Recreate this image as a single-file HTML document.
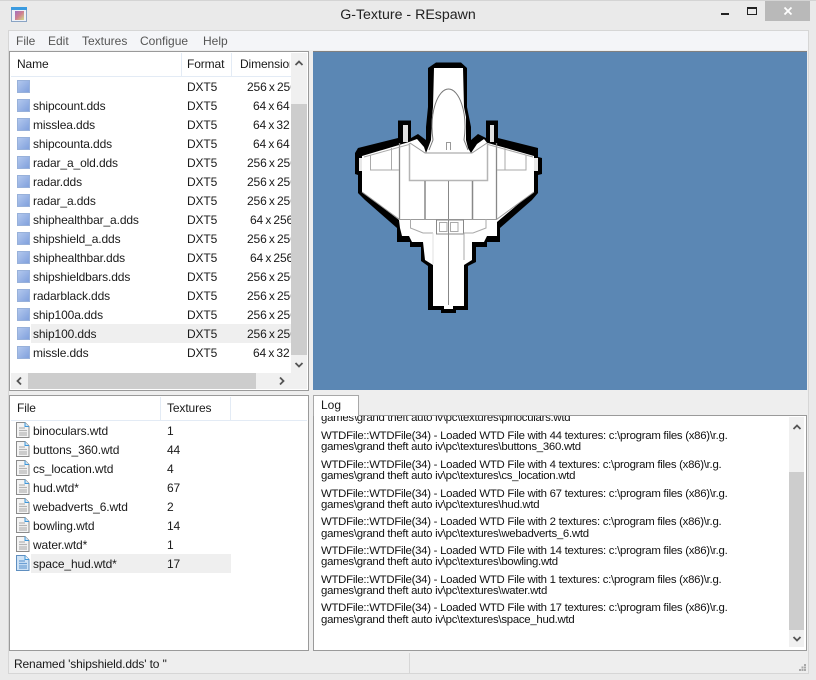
<!DOCTYPE html>
<html><head><meta charset="utf-8"><style>
html,body{margin:0;padding:0}
body{width:816px;height:680px;position:relative;overflow:hidden;background:#eaeaea;font-family:"Liberation Sans",sans-serif;font-size:12px;color:#1a1a1a}
.a{position:absolute;white-space:nowrap}
.panel{position:absolute;background:#fff;border:1px solid #9a9a9a;box-sizing:border-box;overflow:hidden}
.t{position:absolute;white-space:nowrap;line-height:19px;height:19px;letter-spacing:-.12px}
.d{word-spacing:-1px;overflow:hidden}
.w{left:247px;width:44px}
.m{left:250px;width:41px}
.s{left:253px}
.sep{position:absolute;width:1px;background:#e3ebf5}
svg{position:absolute;overflow:visible}
.log{position:absolute;left:7px;white-space:nowrap;font-size:11.4px;line-height:13px;height:13px;letter-spacing:-.27px;color:#111}
</style></head><body>
<div class="a" style="left:0;top:0;width:816px;height:1px;background:#d4d4d4"></div>
<svg style="left:11px;top:7px" width="17" height="16" viewBox="0 0 17 16">
<defs><linearGradient id="g1" x1="0" y1="0" x2="1" y2="1"><stop offset="0" stop-color="#a070c0"/><stop offset=".5" stop-color="#d08090"/><stop offset="1" stop-color="#d0e08a"/></linearGradient>
<linearGradient id="b" x1="0" y1="0" x2="1" y2="1"><stop offset="0" stop-color="#b4c9ee"/><stop offset="1" stop-color="#7f9fdc"/></linearGradient>
<symbol id="sq" viewBox="0 0 13 13" width="13" height="13"><rect x=".5" y=".5" width="12" height="12" fill="url(#b)" stroke="#98b1da"/></symbol>
<symbol id="doc" viewBox="0 0 15 16" width="15" height="16"><path d="M1.5.5H10L14 4.5V15.5H1.500Z" fill="#f4f4f4" stroke="#8b8b8b"/><path d="M10 .5V4.500H14" fill="#cfe6f8" stroke="#3f97d8"/><path d="M4 6H10M4 8.500H12M4 11H12M4 13H12" stroke="#b4b4b4" stroke-width="1.300"/></symbol>
<symbol id="docb" viewBox="0 0 15 16" width="15" height="16"><path d="M1.5.5H10L14 4.5V15.5H1.500Z" fill="#cfe3f6" stroke="#5f8fc0"/><path d="M10 .5V4.500H14" fill="#e8f3fc" stroke="#3f97d8"/><path d="M4 6H10M4 8.500H12M4 11H12M4 13H12" stroke="#6b9fd4" stroke-width="1.300"/></symbol>
</defs>
<rect x=".5" y=".5" width="15" height="14" fill="#eef2f8" stroke="#8aa4c4"/><rect x="0" y="0" width="16" height="3" fill="#3b9be0"/><rect x="4" y="4" width="9" height="9" fill="url(#g1)"/></svg>
<div class="a" style="left:0;width:816px;top:6px;text-align:center;font-size:14.200px;line-height:19px;color:#222">G-Texture - REspawn</div>
<div class="a" style="left:721px;top:13px;width:8px;height:2px;background:#222"></div>
<div class="a" style="left:747px;top:7px;border:1px solid #222;border-top-width:2px;width:8px;height:5px"></div>
<div class="a" style="left:765px;top:1px;width:45px;height:20px;background:#b9b9b9"></div>
<svg style="left:784px;top:7px" width="8" height="8"><path d="M.5.5L7.500 7.500M7.500.5L.5 7.500" stroke="#fff" stroke-width="1.800"/></svg>

<div class="a" style="left:8px;top:30px;width:801px;height:644px;border:1px solid #d6d6d6;box-sizing:border-box;background:#eeeeee"></div>
<div class="a" style="left:9px;top:31px;width:799px;height:19px;background:#f4f5f8"></div>
<div class="a" style="left:16px;top:32px;line-height:18px;color:#555">File</div>
<div class="a" style="left:48px;top:32px;line-height:18px;color:#555">Edit</div>
<div class="a" style="left:82px;top:32px;line-height:18px;color:#555">Textures</div>
<div class="a" style="left:140px;top:32px;line-height:18px;color:#555">Configue</div>
<div class="a" style="left:203px;top:32px;line-height:18px;color:#555">Help</div>

<!-- top list -->
<div class="panel" style="left:9px;top:51px;width:300px;height:340px"></div>
<div class="a" style="left:11px;top:76px;width:280px;height:1px;background:#e3ebf5"></div>
<div class="sep" style="left:181px;top:53px;height:23px"></div>
<div class="sep" style="left:231px;top:53px;height:23px"></div>
<div class="t" style="left:17px;top:55px">Name</div>
<div class="t" style="left:187px;top:55px">Format</div>
<div class="t" style="left:240px;top:55px;width:50px;overflow:hidden">Dimension</div>
<div class="a" style="left:31px;top:324px;width:260px;height:19px;background:#efefef"></div>

<svg style="left:17px;top:80px" width="13" height="13"><use href="#sq"/></svg>
<div class="t" style="left:187px;top:78px">DXT5</div><div class="t d w" style="top:78px">256 x 256</div>

<svg style="left:17px;top:99px" width="13" height="13"><use href="#sq"/></svg>
<div class="t" style="left:33px;top:97px">shipcount.dds</div><div class="t" style="left:187px;top:97px">DXT5</div><div class="t d s" style="top:97px">64 x 64</div>

<svg style="left:17px;top:118px" width="13" height="13"><use href="#sq"/></svg>
<div class="t" style="left:33px;top:116px">misslea.dds</div><div class="t" style="left:187px;top:116px">DXT5</div><div class="t d s" style="top:116px">64 x 32</div>

<svg style="left:17px;top:137px" width="13" height="13"><use href="#sq"/></svg>
<div class="t" style="left:33px;top:135px">shipcounta.dds</div><div class="t" style="left:187px;top:135px">DXT5</div><div class="t d s" style="top:135px">64 x 64</div>

<svg style="left:17px;top:156px" width="13" height="13"><use href="#sq"/></svg>
<div class="t" style="left:33px;top:154px">radar_a_old.dds</div><div class="t" style="left:187px;top:154px">DXT5</div><div class="t d w" style="top:154px">256 x 256</div>

<svg style="left:17px;top:175px" width="13" height="13"><use href="#sq"/></svg>
<div class="t" style="left:33px;top:173px">radar.dds</div><div class="t" style="left:187px;top:173px">DXT5</div><div class="t d w" style="top:173px">256 x 256</div>

<svg style="left:17px;top:194px" width="13" height="13"><use href="#sq"/></svg>
<div class="t" style="left:33px;top:192px">radar_a.dds</div><div class="t" style="left:187px;top:192px">DXT5</div><div class="t d w" style="top:192px">256 x 256</div>

<svg style="left:17px;top:213px" width="13" height="13"><use href="#sq"/></svg>
<div class="t" style="left:33px;top:211px">shiphealthbar_a.dds</div><div class="t" style="left:187px;top:211px">DXT5</div><div class="t d m" style="top:211px">64 x 256</div>

<svg style="left:17px;top:232px" width="13" height="13"><use href="#sq"/></svg>
<div class="t" style="left:33px;top:230px">shipshield_a.dds</div><div class="t" style="left:187px;top:230px">DXT5</div><div class="t d w" style="top:230px">256 x 256</div>

<svg style="left:17px;top:251px" width="13" height="13"><use href="#sq"/></svg>
<div class="t" style="left:33px;top:249px">shiphealthbar.dds</div><div class="t" style="left:187px;top:249px">DXT5</div><div class="t d m" style="top:249px">64 x 256</div>

<svg style="left:17px;top:270px" width="13" height="13"><use href="#sq"/></svg>
<div class="t" style="left:33px;top:268px">shipshieldbars.dds</div><div class="t" style="left:187px;top:268px">DXT5</div><div class="t d w" style="top:268px">256 x 256</div>

<svg style="left:17px;top:289px" width="13" height="13"><use href="#sq"/></svg>
<div class="t" style="left:33px;top:287px">radarblack.dds</div><div class="t" style="left:187px;top:287px">DXT5</div><div class="t d w" style="top:287px">256 x 256</div>

<svg style="left:17px;top:308px" width="13" height="13"><use href="#sq"/></svg>
<div class="t" style="left:33px;top:306px">ship100a.dds</div><div class="t" style="left:187px;top:306px">DXT5</div><div class="t d w" style="top:306px">256 x 256</div>

<svg style="left:17px;top:327px" width="13" height="13"><use href="#sq"/></svg>
<div class="t" style="left:33px;top:325px">ship100.dds</div><div class="t" style="left:187px;top:325px">DXT5</div><div class="t d w" style="top:325px">256 x 256</div>

<svg style="left:17px;top:346px" width="13" height="13"><use href="#sq"/></svg>
<div class="t" style="left:33px;top:344px">missle.dds</div><div class="t" style="left:187px;top:344px">DXT5</div><div class="t d s" style="top:344px">64 x 32</div>

<!-- top list scrollbars -->
<div class="a" style="left:291px;top:53px;width:16px;height:320px;background:#f0f0f0"></div>
<div class="a" style="left:291px;top:104px;width:16px;height:251px;background:#cdcdcd"></div>
<svg style="left:295px;top:60px" width="8" height="6"><path d="M.5 5L4 1.500L7.500 5" fill="none" stroke="#555" stroke-width="1.800"/></svg>
<svg style="left:295px;top:362px" width="8" height="6"><path d="M.5 1L4 4.500L7.500 1" fill="none" stroke="#555" stroke-width="1.800"/></svg>
<div class="a" style="left:11px;top:373px;width:296px;height:16px;background:#f0f0f0"></div>
<div class="a" style="left:28px;top:373px;width:228px;height:16px;background:#cdcdcd"></div>
<svg style="left:16px;top:377px" width="6" height="8"><path d="M5 .5L1.500 4L5 7.500" fill="none" stroke="#555" stroke-width="1.800"/></svg>
<svg style="left:279px;top:377px" width="6" height="8"><path d="M1 .5L4.500 4L1 7.500" fill="none" stroke="#555" stroke-width="1.800"/></svg>

<!-- preview -->
<div class="a" style="left:313px;top:51px;width:494px;height:339px;background:#5b87b4;border-top:1px solid #808080;box-sizing:border-box"></div>
<svg style="left:0;top:0" width="816" height="680">
<polygon fill="#000" points="436,62.500 461,62.500 467,68 467,107 471,127 471,140 478,134 486,138 486,120.500 498,120.500 498,138 538,148 538,157 542,158 542,174 538,175 538,193 532,200 500,228 500,242 487,242 487,247 476,247 476,262 468,266 468,310 456,310 456,313 441,313 441,310 428,310 428,266 421,261 421,247 410,247 410,242 397,242 397,228 365,200 358,193 358,175 355,174 355,153 358,148 398,138 398,120.500 411,120.500 411,138 418,134 426,140 426,127 428,107 428,68"/>
<polygon fill="#fff" points="434,68 463,68 464,107 466,117 466,140 468,148 471,153 477,144 484,139 487,142.700 534,156 534,192 523,200 497,222 497,236 487,236 484,242 472,242 472,260 464,265 464,306 433,306 433,265 425,260 423,242 412,242 409,236 402,236 400,228 399,220 373,200 362,192 362,156 409,142 417,139 424,147 426,153 428,148 431,140 432,117 433,107"/>
<rect x="359" y="158" width="3" height="13" fill="#e8e8e8"/><rect x="534" y="158" width="4" height="13" fill="#e8e8e8"/>
<rect x="403" y="125" width="5" height="17" fill="#e0e0e0"/><rect x="490" y="125" width="4" height="17" fill="#e0e0e0"/>
<g fill="none" stroke="#9b9b9b" stroke-width="1">
<path d="M433 140C429 112 438 89 448.500 89C459 89 468 112 464 140L468 150" stroke="#777"/>
<path d="M433 140L429 150"  stroke="#777"/>
<path d="M409.500 143V180.500H487.500V143" stroke="#b5b5b5" stroke-width="1.500"/>
<path d="M410 143L425 153H472L487 143" stroke="#999"/>
<path d="M399.500 143V219M496.500 143V219" stroke="#888" stroke-width="1.300"/>
<path d="M425 181V219M472.500 181V219" stroke="#888" stroke-width="1.500"/>
<path d="M448.500 181V305" stroke="#888"/>
<path d="M364 157L409 144.500M533 157L488 144.500" stroke="#aaa"/>
<path d="M370.500 155V170H399M526 155V170H497M391.500 148V170M505 148V170" stroke="#aaa"/>
<path d="M362 192L399.500 219.500H496.500L534 192"/>
<path d="M446.500 150V142.500H450.500V150" stroke="#999"/>
<rect x="436.500" y="220" width="27" height="14" stroke="#888"/>
<rect x="439.500" y="222.500" width="7.500" height="9" stroke="#aaa"/><rect x="450.500" y="222.500" width="7.500" height="9" stroke="#aaa"/>
<path d="M410.500 219V228L423 233H433M486 219V228L473 233H464M464 233V260" stroke="#aaa"/>
<path d="M433 233V264" stroke="#e2e2e2"/>
</g>
<rect x="444" y="306" width="9" height="3" fill="#fff"/>
</svg>

<!-- bottom list -->
<div class="panel" style="left:9px;top:395px;width:300px;height:256px"></div>
<div class="a" style="left:11px;top:420px;width:296px;height:1px;background:#e3ebf5"></div>
<div class="sep" style="left:160px;top:397px;height:23px"></div>
<div class="sep" style="left:230px;top:397px;height:23px"></div>
<div class="t" style="left:17px;top:399px">File</div>
<div class="t" style="left:167px;top:399px">Textures</div>
<div class="a" style="left:31px;top:554px;width:200px;height:19px;background:#efefef"></div>

<svg style="left:15px;top:422px" width="15" height="16"><use href="#doc"/></svg><div class="t" style="left:33px;top:422px">binoculars.wtd</div><div class="t" style="left:167px;top:422px">1</div>
<svg style="left:15px;top:441px" width="15" height="16"><use href="#doc"/></svg><div class="t" style="left:33px;top:441px">buttons_360.wtd</div><div class="t" style="left:167px;top:441px">44</div>
<svg style="left:15px;top:460px" width="15" height="16"><use href="#doc"/></svg><div class="t" style="left:33px;top:460px">cs_location.wtd</div><div class="t" style="left:167px;top:460px">4</div>
<svg style="left:15px;top:479px" width="15" height="16"><use href="#doc"/></svg><div class="t" style="left:33px;top:479px">hud.wtd*</div><div class="t" style="left:167px;top:479px">67</div>
<svg style="left:15px;top:498px" width="15" height="16"><use href="#doc"/></svg><div class="t" style="left:33px;top:498px">webadverts_6.wtd</div><div class="t" style="left:167px;top:498px">2</div>
<svg style="left:15px;top:517px" width="15" height="16"><use href="#doc"/></svg><div class="t" style="left:33px;top:517px">bowling.wtd</div><div class="t" style="left:167px;top:517px">14</div>
<svg style="left:15px;top:536px" width="15" height="16"><use href="#doc"/></svg><div class="t" style="left:33px;top:536px">water.wtd*</div><div class="t" style="left:167px;top:536px">1</div>
<svg style="left:15px;top:555px" width="15" height="16"><use href="#docb"/></svg><div class="t" style="left:33px;top:555px">space_hud.wtd*</div><div class="t" style="left:167px;top:555px">17</div>

<!-- log -->
<div class="panel" style="left:313px;top:415px;width:494px;height:236px"></div>
<div class="a" style="left:313px;top:395px;width:46px;height:21px;background:#fff;border:1px solid #a8a8a8;border-bottom:0;box-sizing:border-box"></div>
<div class="a" style="left:321px;top:396px;line-height:19px;font-size:12px">Log</div>
<div class="a" style="left:314px;top:416px;width:474px;height:233px;overflow:hidden;background:#fff">
<div class="log" style="top:-4px">games\grand theft auto iv\pc\textures\pinoculars.wtd</div>
<div class="log" style="top:14px">WTDFile::WTDFile(34) - Loaded WTD File with 44 textures: c:\program files (x86)\r.g.</div>
<div class="log" style="top:25px">games\grand theft auto iv\pc\textures\buttons_360.wtd</div>
<div class="log" style="top:43px">WTDFile::WTDFile(34) - Loaded WTD File with 4 textures: c:\program files (x86)\r.g.</div>
<div class="log" style="top:54px">games\grand theft auto iv\pc\textures\cs_location.wtd</div>
<div class="log" style="top:72px">WTDFile::WTDFile(34) - Loaded WTD File with 67 textures: c:\program files (x86)\r.g.</div>
<div class="log" style="top:83px">games\grand theft auto iv\pc\textures\hud.wtd</div>
<div class="log" style="top:100px">WTDFile::WTDFile(34) - Loaded WTD File with 2 textures: c:\program files (x86)\r.g.</div>
<div class="log" style="top:112px">games\grand theft auto iv\pc\textures\webadverts_6.wtd</div>
<div class="log" style="top:129px">WTDFile::WTDFile(34) - Loaded WTD File with 14 textures: c:\program files (x86)\r.g.</div>
<div class="log" style="top:140px">games\grand theft auto iv\pc\textures\bowling.wtd</div>
<div class="log" style="top:158px">WTDFile::WTDFile(34) - Loaded WTD File with 1 textures: c:\program files (x86)\r.g.</div>
<div class="log" style="top:169px">games\grand theft auto iv\pc\textures\water.wtd</div>
<div class="log" style="top:186px">WTDFile::WTDFile(34) - Loaded WTD File with 17 textures: c:\program files (x86)\r.g.</div>
<div class="log" style="top:198px">games\grand theft auto iv\pc\textures\space_hud.wtd</div>
</div>
<div class="a" style="left:789px;top:417px;width:15px;height:230px;background:#f0f0f0"></div>
<div class="a" style="left:789px;top:472px;width:15px;height:158px;background:#cdcdcd"></div>
<svg style="left:793px;top:424px" width="8" height="6"><path d="M.5 5L4 1.500L7.500 5" fill="none" stroke="#555" stroke-width="1.800"/></svg>
<svg style="left:793px;top:636px" width="8" height="6"><path d="M.5 1L4 4.500L7.500 1" fill="none" stroke="#555" stroke-width="1.800"/></svg>

<!-- status -->
<div class="a" style="left:409px;top:653px;width:1px;height:20px;background:#d6d6d6"></div>
<div class="a" style="left:14px;top:655px;line-height:18px;letter-spacing:-.15px">Renamed 'shipshield.dds' to ''</div>
<svg style="left:799px;top:664px" width="8" height="8" fill="#a8a8a8"><rect x="5" y="0" width="2" height="2"/><rect x="2.500" y="2.500" width="2" height="2"/><rect x="5" y="2.500" width="2" height="2"/><rect x="0" y="5" width="2" height="2"/><rect x="2.500" y="5" width="2" height="2"/><rect x="5" y="5" width="2" height="2"/></svg>
</body></html>
